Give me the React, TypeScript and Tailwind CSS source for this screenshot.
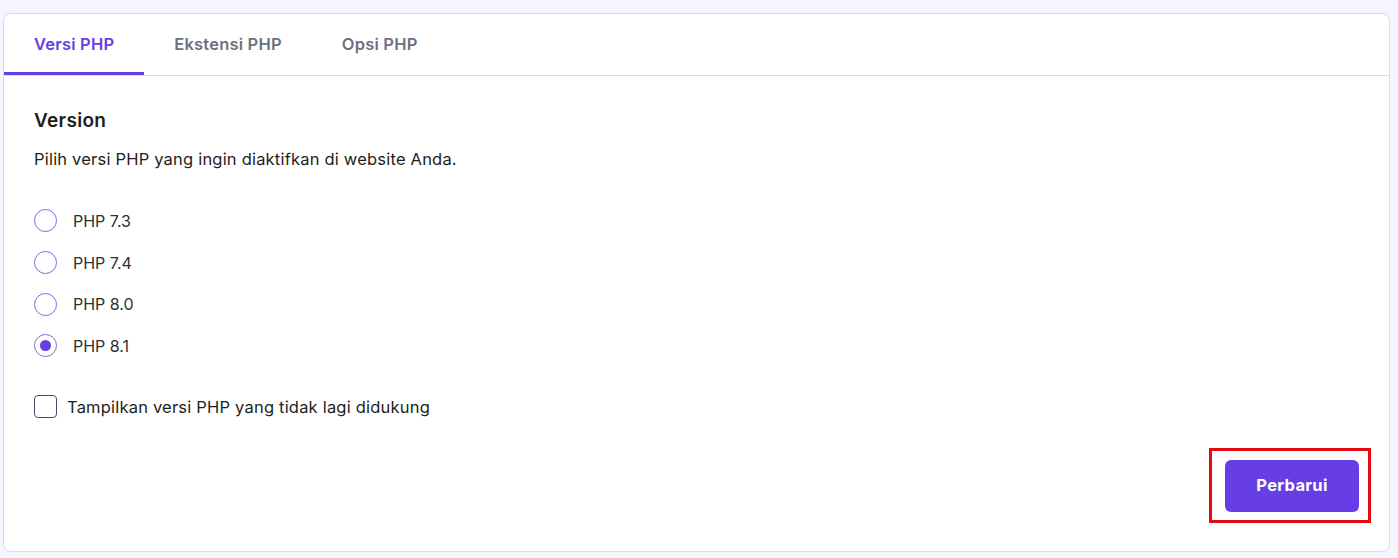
import { useState } from "react"

const versions = ["PHP 7.3", "PHP 7.4", "PHP 8.0", "PHP 8.1"]
const tabs = ["Versi PHP", "Ekstensi PHP", "Opsi PHP"]

export default function App() {
  const [selected, setSelected] = useState("PHP 8.1")
  const [showOld, setShowOld] = useState(false)

  return (
    <div className="min-h-[558px] bg-[#f4f5ff] pt-[13px] pl-[3px] pr-[8px] pb-[5px] font-['Inter',sans-serif] text-[#1d1e20]">
      <div className="rounded-[8px] border border-[#dadce0] bg-white">
        <div className="flex border-b border-[#dadce0]">
          {tabs.map((t, i) => (
            <button
              key={t}
              className={
                i === 0
                  ? "h-[61px] border-b-[3px] border-[#673de6] px-[30px] pt-[3px] text-[16.5px] tracking-[0.2px] font-semibold text-[#673de6]"
                  : "h-[61px] border-b-[3px] border-transparent px-[30px] pt-[3px] text-[16.5px] tracking-[0.2px] font-semibold text-[#6d7081]"
              }
            >
              {t}
            </button>
          ))}
        </div>

        <div className="px-[30px] pt-[32px] pb-[39px]">
          <h2 className="text-[19px] leading-[26px] tracking-[0.3px] font-semibold">Version</h2>
          <p className="mt-[13px] text-[16.5px] leading-[24px] tracking-[0.2px] text-[#1d1e20]">
            Pilih versi PHP yang ingin diaktifkan di website Anda.
          </p>

          <div className="mt-[29px] flex flex-col">
            {versions.map((v) => (
              <label key={v} className="flex h-[41.7px] cursor-pointer items-center gap-[16px]" onClick={() => setSelected(v)}>
                <span className="flex h-[23px] w-[23px] items-center justify-center rounded-full border-[1.5px] border-[#7a6fd6] bg-white">
                  {selected === v && <span className="h-[11px] w-[11px] rounded-full bg-[#673de6]" />}
                </span>
                <span className="text-[16px] text-[#2f2f33]">{v}</span>
              </label>
            ))}
          </div>

          <label className="mt-[28px] flex cursor-pointer items-center gap-[10px]" onClick={() => setShowOld(!showOld)}>
            <span className="flex h-[23px] w-[23px] items-center justify-center rounded-[4px] border-[1.5px] border-[#4b4677] bg-white">
              {showOld && <span className="h-[11px] w-[11px] rounded-[2px] bg-[#673de6]" />}
            </span>
            <span className="text-[16.5px] leading-[24px] tracking-[0.2px] text-[#1d1e20]">Tampilkan versi PHP yang tidak lagi didukung</span>
          </label>

          <div className="mt-[41px] flex justify-end">
            <div className="relative">
              <button className="h-[52px] w-[134px] rounded-[6px] bg-[#673de6] text-[16.5px] tracking-[0.3px] font-bold text-white">
                Perbarui
              </button>
              <div className="pointer-events-none absolute -top-[12px] -bottom-[11px] -left-[16px] -right-[12px] border-[3px] border-[#e50914]" />
            </div>
          </div>
        </div>
      </div>
    </div>
  )
}
